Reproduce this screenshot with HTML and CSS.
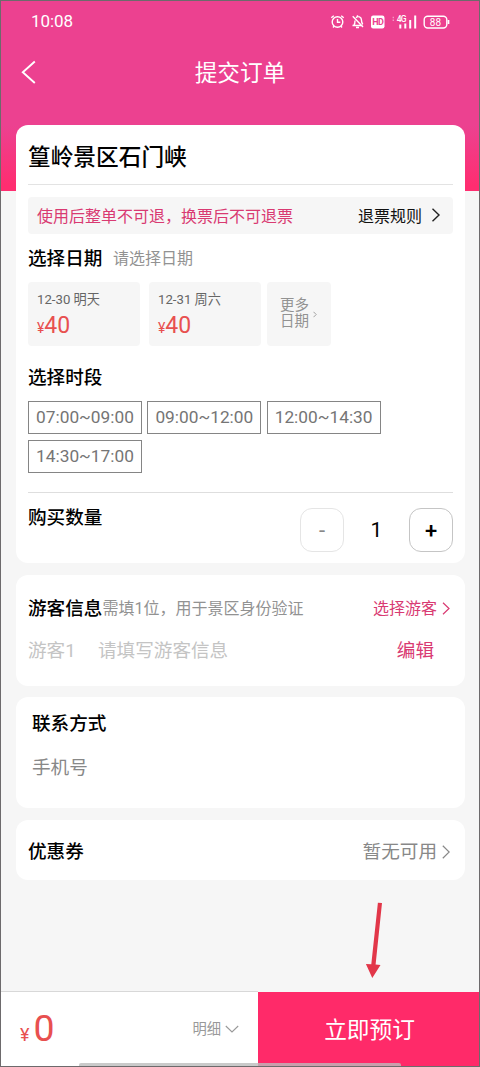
FILE: index.html
```html
<!DOCTYPE html>
<html lang="zh-CN">
<head>
<meta charset="utf-8">
<title>提交订单</title>
<link rel="stylesheet" href="styles.css">
</head>
<body>
<div class="screen">
  <header class="header">
    <div class="status">
      <span class="clock">10:08</span>
      <svg class="status-icons" width="126" height="20" viewBox="0 0 126 20" fill="none" stroke="#fff" stroke-width="1.400">
        <circle cx="11.500" cy="11" r="5.300"/><path d="M11.500 8v3.300h2.800M5.300 6.700l2.500-2M17.700 6.700l-2.500-2M8 15.300l-1 1.200M15 15.300l1 1.200"/>
        <path d="M26.500 14.500h10M28 14c1-1.200 1-2.500 1-4.500M30 6.800c2-2.300 5.500-.8 5.500 2.400 0 1.800.3 3 1.300 4M31.500 5.500V4.300M30 16.500h3M26.700 5.300l10.300 10.700"/>
        <rect x="45" y="4.500" width="13.500" height="13" rx="2.200" fill="#fff" stroke="none"/>
        <text class="hd" x="46.300" y="14.300">HD</text>
        <path d="M67.300 5.800v1.500M67.300 8.500v1.500" stroke-opacity=".45"/>
        <text class="net" x="70.700" y="10.800">4G</text>
        <path d="M74.300 13.500v4M79.300 12.500v5M84.200 9v8.500M89.200 4.500v13" stroke-width="2"/>
        <rect x="98.200" y="5.300" width="22.600" height="11.700" rx="3.500"/>
        <path d="M122.500 9v4" stroke-width="1.700"/>
        <text class="pct" x="103.800" y="14.600">88</text>
      </svg>
    </div>
    <div class="nav">
      <svg class="back" width="16" height="24" viewBox="0 0 16 24" fill="none" stroke="#fff" stroke-width="1.900"><path d="M13.800 1.500 1.800 12.200 13.800 23"/></svg>
      <h1 class="nav-title">提交订单</h1>
    </div>
  </header>

  <main class="content">
    <section class="card order">
      <h2 class="spot">篁岭景区石门峡</h2>
      <div class="notice">
        <span class="notice-text">使用后整单不可退，换票后不可退票</span>
        <span class="rule">退票规则</span>
        <svg width="10" height="14" viewBox="0 0 10 14" fill="none" stroke="#222" stroke-width="1.400"><path d="M1.500.8 8 7 1.500 13.200"/></svg>
      </div>
      <div class="row date-head"><h3 class="label">选择日期</h3><span class="hint">请选择日期</span></div>
      <div class="dates">
        <div class="date"><span class="day">12-30 明天</span><span class="price"><small class="yen">¥</small>40</span></div>
        <div class="date"><span class="day">12-31 周六</span><span class="price"><small class="yen">¥</small>40</span></div>
        <div class="more"><span>更多<br>日期</span><svg width="4" height="7" viewBox="0 0 4 7" fill="none" stroke="#999" stroke-width=".9"><path d="M.5.8 3.200 3.500.5 6.200"/></svg></div>
      </div>
      <h3 class="label slot-head">选择时段</h3>
      <div class="slots">
        <span class="slot">07:00~09:00</span><span class="slot">09:00~12:00</span><span class="slot">12:00~14:30</span><span class="slot">14:30~17:00</span>
      </div>
      <div class="quantity">
        <h3 class="label">购买数量</h3>
        <div class="stepper"><span class="step off">-</span><span class="count">1</span><span class="step">+</span></div>
      </div>
    </section>

    <section class="card visitor">
      <div class="row"><h3 class="label">游客信息</h3><span class="hint tight">需填1位，用于景区身份验证</span>
        <span class="choose">选择游客</span>
        <svg width="8" height="13" viewBox="0 0 8 13" fill="none" stroke="#d93a72" stroke-width="1.200"><path d="M1 .8 7 6.500 1 12.200"/></svg>
      </div>
      <div class="row entry"><span class="who">游客1</span><span>请填写游客信息</span><span class="edit">编辑</span></div>
    </section>

    <section class="card contact">
      <h3 class="label">联系方式</h3>
      <div class="phone">手机号</div>
    </section>

    <section class="card coupon">
      <h3 class="label">优惠券</h3>
      <span class="none">暂无可用</span>
      <svg width="8" height="14" viewBox="0 0 8 14" fill="none" stroke="#888" stroke-width="1.200"><path d="M.8.700 7.200 7 .8 13.300"/></svg>
    </section>
  </main>

  <svg class="arrow" width="34" height="80" viewBox="0 0 34 80" fill="#e23749"><path d="M17.900 2.700 22 3 15.600 64.600 20.500 65 12.300 78 5.900 64 11.300 64.300Z"/></svg>

  <footer class="footer">
    <div class="summary">
      <span class="total"><small class="total-yen">¥</small>0</span>
      <span class="detail">明细</span>
      <svg width="14" height="8" viewBox="0 0 14 8" fill="none" stroke="#999" stroke-width="1.100"><path d="M.8 1 7 7 13.200 1"/></svg>
    </div>
    <div class="book">立即预订</div>
  </footer>
  <div class="home-bar"></div>
</div>
</body>
</html>
```

FILE: styles.css
```css
* { box-sizing: border-box; }
body { margin: 0; font-family: Roboto, "Noto Sans CJK SC", sans-serif; color: #000; }
h1, h2, h3 { margin: 0; }
svg { flex: none; display: block; }
.screen {
  position: relative; display: flex; flex-direction: column;
  width: 480px; height: 1067px; overflow: hidden;
  border: 1px solid #6d6a6c; background: #f6f6f6; white-space: nowrap;
}
.header {
  flex: none; height: 190px; color: #fff;
  background: linear-gradient(#ec4190 0 125px, #ff2d70 185px);
}
.status { display: flex; justify-content: space-between; align-items: center; height: 40px; padding: 0 27px 0 30px; }
.clock { font-size: 17px; letter-spacing: -.1px; }
.status-icons text { fill: #fff; stroke: none; font-family: Roboto, sans-serif; }
.status-icons .hd { fill: #ec4190; font-size: 9px; font-weight: 700; letter-spacing: -.7px; }
.status-icons .net { font-size: 8.500px; font-weight: 500; letter-spacing: -.7px; }
.status-icons .pct { font-size: 10px; }
.nav { display: grid; grid-template-columns: 60px 1fr 60px; align-items: center; height: 62px; }
.back { margin-left: 20px; }
.nav-title { padding-top: 3px; font-size: 22.700px; font-weight: 400; text-align: center; line-height: 30px; }
.content { display: flex; flex-direction: column; gap: 11.700px; margin: -66px 14px 0 15px; }
.card { background: #fff; border-radius: 12px; padding: 0 12px; }
.order { height: 438px; }
.spot {
  height: 59.500px; line-height: 65px; font-size: 22.700px; font-weight: 500;
  border-bottom: 1.500px solid #e3e3e3;
}
.notice {
  display: flex; align-items: center; height: 37px; margin-top: 12.500px;
  padding: 0 12px 1px 9px; border-radius: 4px; background: #f6f6f6; font-size: 16px;
}
.notice-text { color: #d93a72; }
.rule { margin: 0 9px 0 auto; color: #111; }
.row { display: flex; align-items: center; }
.label { font-size: 18.600px; font-weight: 500; line-height: 26px; }
.hint { margin-left: 10.500px; font-size: 16px; line-height: 28px; color: #929292; }
.tight { margin-left: 0; }
.date-head { height: 48px; padding-top: 2px; }
.dates { display: flex; }
.date, .more { height: 64px; border-radius: 4px; background: #f6f6f6; }
.date { display: flex; flex-direction: column; width: 112px; margin-right: 9px; padding: 7px 9px; }
.date + .date { margin-right: 6px; }
.day { font-size: 13.200px; line-height: 21px; color: #666; }
.price { padding-top: 1px; font-size: 23px; line-height: 30px; color: #e8504f; }
.yen { font-size: 14px; }
.more { display: flex; align-items: center; gap: 4px; width: 64px; padding-left: 13px; font-size: 14.500px; line-height: 16px; color: #929292; }
.slot-head { margin-top: 19px; }
.slots { display: flex; flex-wrap: wrap; gap: 6px 5.300px; margin-top: 10px; }
.slot { width: 114px; height: 33px; border: 1px solid #858585; font-size: 17.300px; line-height: 31px; text-align: center; color: #757575; }
.quantity { display: flex; justify-content: space-between; margin-top: 19px; padding-top: 12px; border-top: 1px solid #dedede; }
.stepper { display: flex; align-items: center; width: 153px; height: 50px; justify-content: space-between; }
.step { width: 44px; height: 44px; border: 1px solid #c5c5c5; border-radius: 12px; font-size: 22px; line-height: 44px; font-weight: 500; text-align: center; }
.off { border-color: #e5e5e5; color: #888; font-weight: 400; }
.count { font-size: 21px; }
.visitor { height: 111px; padding-top: 20px; }
.choose { margin: 0 5px 0 auto; font-size: 16px; line-height: 28px; color: #d93a72; }
.visitor .row { padding-right: 3px; }
.visitor .entry { margin-top: 14px; padding-right: 19px; font-size: 18.600px; line-height: 28px; color: #c4c4c4; }
.who { width: 70px; }
.edit { margin-left: auto; color: #d93a72; }
.contact { height: 111px; padding: 14px 16px; }
.phone { margin-top: 17px; font-size: 18.600px; line-height: 28px; color: #888; }
.coupon { display: flex; align-items: center; height: 60px; padding-top: 4px; padding-right: 15px; }
.none { margin: 0 5px 0 auto; font-size: 18.600px; line-height: 26px; color: #888; }
.arrow { position: absolute; left: 359px; top: 899px; }
.footer { display: flex; height: 75px; margin-top: auto; }
.summary { display: flex; align-items: center; width: 257px; padding: 0 19px; border-top: 1px solid #d8d8d8; background: #fff; }
.total { padding-top: 5px; font-size: 37.500px; line-height: 40px; color: #e8504f; }
.total-yen { margin-right: 4px; font-size: 18px; }
.detail { margin: 0 4px 0 auto; font-size: 14.300px; line-height: 20px; color: #999; }
.book { flex: 1; margin-top: 1px; padding-left: 2px; background: #ff2a69; color: #fff; font-size: 22.700px; line-height: 77px; text-align: center; }
.home-bar { position: absolute; left: 78px; bottom: 0; width: 322px; height: 3px; border-radius: 2px 2px 0 0; background: #bdbdbdcc; }
```
